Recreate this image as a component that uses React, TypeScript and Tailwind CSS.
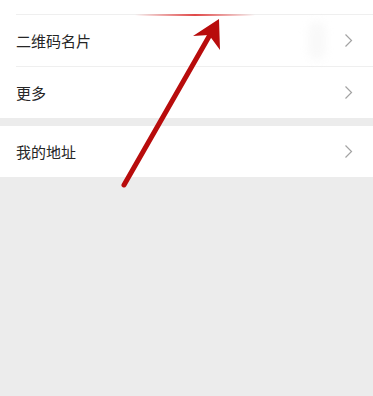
const rows = [
  { label: '二维码名片' },
  { label: '更多' },
];

const Chevron = () => (
  <svg width="9" height="15" viewBox="0 0 9 15" fill="none" className="shrink-0">
    <path d="M1.5 1.5 L7.5 7.5 L1.5 13.5" stroke="#a3a3a3" strokeWidth="1.2" />
  </svg>
);

const Row = ({ label, divider }: { label: string; divider?: boolean }) => (
  <div className="bg-white pl-4">
    <div
      className={`flex h-[51px] items-center justify-between pr-5 ${
        divider ? 'box-content border-b border-[#efefef]' : ''
      }`}
    >
      <span className="text-[15px] leading-none text-[#262626]">{label}</span>
      <Chevron />
    </div>
  </div>
);

export default function App() {
  return (
    <div
      className="relative min-h-[396px] w-full overflow-hidden bg-[#ececec]"
      style={{ fontFamily: '"Noto Sans CJK SC", "Noto Sans", sans-serif' }}
    >
      {/* top edge */}
      <div className="bg-white pl-4">
        <div className="h-[14px] box-content border-b border-[#efefef]" />
      </div>
      <Row label={rows[0].label} divider />
      <Row label={rows[1].label} />
      <div className="h-[8px]" />
      <Row label="我的地址" />

      {/* red highlight at top line */}
      <div className="absolute left-[135px] top-[14px] h-[2px] w-[120px] bg-gradient-to-r from-transparent via-[#e04848] to-transparent" />

      {/* faint ghost near first chevron */}
      <div className="absolute left-[308px] top-[22px] h-[38px] w-[18px] rounded-full bg-[#f3f3f3] opacity-50 blur-[4px]" />

      {/* annotation arrow */}
      <svg className="pointer-events-none absolute left-0 top-0" width="373" height="396" viewBox="0 0 373 396">
        <line x1="124" y1="185" x2="211" y2="33" stroke="#b80c0c" strokeWidth="5" strokeLinecap="round" />
        <polygon points="219,19 193,36 209,35 220,50" fill="#b80c0c" />
      </svg>
    </div>
  );
}
